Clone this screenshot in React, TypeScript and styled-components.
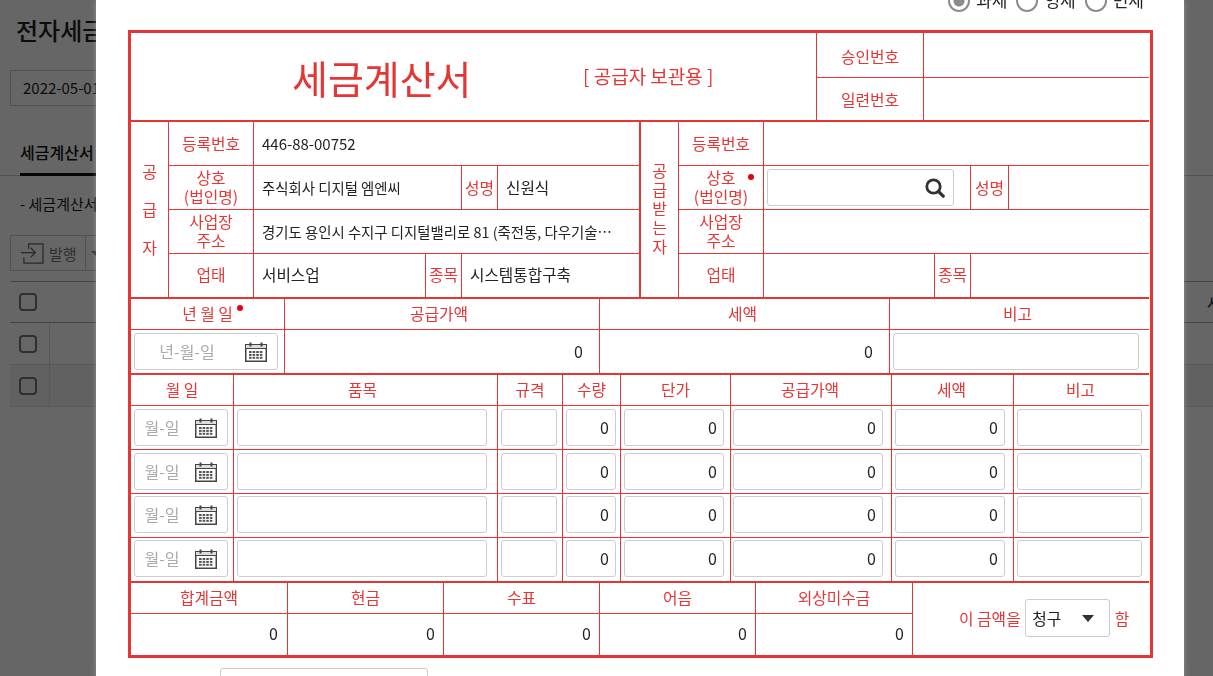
import React from "react";
import styled, { createGlobalStyle } from "styled-components";

const RED = "#e53535";

const GlobalStyle = createGlobalStyle`
  html, body {
    margin: 0;
    height: 100%;
    overflow: hidden;
    background: #fff;
    font-family: "Noto Sans CJK KR", "Noto Sans", sans-serif;
    color: #222;
  }
  * { box-sizing: border-box; }
`;

function CalendarIcon() {
  const dots = [];
  for (let r = 0; r < 3; r++) {
    for (let c = 0; c < 4; c++) {
      dots.push(<rect key={r + "-" + c} x={4 + c * 3.6} y={9 + r * 2.9} width="2.6" height="2" fill="#555" />);
    }
  }
  return (
    <svg width="22" height="20" viewBox="0 0 22 20">
      <rect x="0.75" y="2.75" width="20.5" height="16.5" fill="#fff" stroke="#444" strokeWidth="1.5" />
      <rect x="1" y="3" width="20" height="3.5" fill="#ddd" />
      <line x1="1" y1="6.5" x2="21" y2="6.5" stroke="#444" strokeWidth="1" />
      <rect x="4.5" y="0.5" width="2" height="4" fill="#444" />
      <rect x="15.5" y="0.5" width="2" height="4" fill="#444" />
      {dots}
    </svg>
  );
}

function SearchIcon() {
  return (
    <svg width="20" height="20" viewBox="0 0 20 20">
      <circle cx="8.5" cy="8.5" r="6.7" fill="none" stroke="#333" strokeWidth="2.8" />
      <line x1="13.5" y1="13.5" x2="18.2" y2="18.2" stroke="#333" strokeWidth="3.2" strokeLinecap="round" />
    </svg>
  );
}

function DateField({ text }: { text: string }) {
  return (
    <DateBox>
      <DateInput placeholder={text} readOnly />
      <CalendarIcon />
    </DateBox>
  );
}

const itemCols = "103px 264px 65px 58px 110px 161px 122px 135px";
const itemRows = [0, 1, 2, 3];

export default function App() {
  return (
    <>
      <GlobalStyle />
      <Page>
        <PageTitle>전자세금계산서 발행</PageTitle>
        <DateFilter>2022-05-01</DateFilter>
        <Tabs>
          <Tab>세금계산서 발행</Tab>
        </Tabs>
        <Note>- 세금계산서 발행 내역을 확인합니다.</Note>
        <Actions>
          <IssueButton>
            <svg width="23" height="21" viewBox="0 0 24 22">
              <path d="M8 6V1h15v20H3v-6" fill="none" stroke="#666" strokeWidth="1.3" />
              <path d="M0 10h15M10 5l5 5-5 5" fill="none" stroke="#666" strokeWidth="1.3" />
            </svg>
            발행
          </IssueButton>
          <IssueCaret />
        </Actions>
        <ListRow $head>
          <CheckCell><Check /></CheckCell>
          <HeadText>사업자</HeadText>
        </ListRow>
        <ListRow>
          <CheckCell $line><Check /></CheckCell>
        </ListRow>
        <ListRow $shade>
          <CheckCell $line><Check /></CheckCell>
        </ListRow>
      </Page>

      <Overlay>
        <Modal>
          <TaxTypes>
            <TaxType><Radio $on />과세</TaxType>
            <TaxType><Radio />영세</TaxType>
            <TaxType><Radio />면세</TaxType>
          </TaxTypes>

          <Invoice>
            <HeaderSection>
              <TitleCell>
                <Title>세금계산서</Title>
                <Subtitle>[ 공급자 보관용 ]</Subtitle>
              </TitleCell>
              <NumberCell>승인번호</NumberCell>
              <Cell $end />
              <Cell $bottom>일련번호</Cell>
              <Cell $end $bottom />
            </HeaderSection>

            <PartySection>
              <PartyGrid $divider>
                <SideCell $gap={38}><span>공</span><span>급</span><span>자</span></SideCell>
                <Cell>등록번호</Cell>
                <ValueCell $span={4} $end $digits>446-88-00752</ValueCell>
                <Cell $stack>상호<br />(법인명)</Cell>
                <ValueCell $span={2} $small>주식회사 디지털 엠엔씨</ValueCell>
                <Cell>성명</Cell>
                <ValueCell $end>신원식</ValueCell>
                <Cell $stack>사업장<br />주소</Cell>
                <ValueCell $span={4} $end $small><Clip>경기도 용인시 수지구 디지털밸리로 81 (죽전동, 다우기술빌딩)</Clip></ValueCell>
                <LastCell $bottom>업태</LastCell>
                <ValueCell $bottom>서비스업</ValueCell>
                <LastCell $bottom>종목</LastCell>
                <ValueCell $span={2} $end $bottom>시스템통합구축</ValueCell>
              </PartyGrid>
              <PartyGrid $buyer>
                <SideCell $gap={19}><span>공</span><span>급</span><span>받</span><span>는</span><span>자</span></SideCell>
                <Cell>등록번호</Cell>
                <ValueCell $span={4} $end />
                <Cell $stack>
                  상호<br />(법인명)
                  <NameDot />
                </Cell>
                <InputCell $span={2} $pr={16}>
                  <SearchBox><SearchIcon /></SearchBox>
                </InputCell>
                <Cell>성명</Cell>
                <ValueCell $end />
                <Cell $stack>사업장<br />주소</Cell>
                <ValueCell $span={4} $end />
                <LastCell $bottom>업태</LastCell>
                <ValueCell $bottom />
                <LastCell $bottom>종목</LastCell>
                <ValueCell $span={2} $end $bottom />
              </PartyGrid>
            </PartySection>

            <Section $cols="154px 315px 290px 259px" $rows="31px 43px" $line>
              <ColumnHead>년 월 일<Dot /></ColumnHead>
              <ColumnHead $shift={6}>공급가액</ColumnHead>
              <ColumnHead $shift={4}>세액</ColumnHead>
              <ColumnHead $shift={4} $end>비고</ColumnHead>
              <InputCell $pr={6} $bottom><DateField text="년-월-일" /></InputCell>
              <AmountCell $pr={16} $pb={2} $bottom>0</AmountCell>
              <AmountCell $pr={16} $pb={2} $bottom>0</AmountCell>
              <InputCell $pr={10} $end $bottom><Field /></InputCell>
            </Section>

            <Section $cols={itemCols} $rows="31px 44px 44px 44px 43px" $line>
              <ColumnHead>월 일</ColumnHead>
              <ColumnHead $shift={6}>품목</ColumnHead>
              <ColumnHead>규격</ColumnHead>
              <ColumnHead>수량</ColumnHead>
              <ColumnHead>단가</ColumnHead>
              <ColumnHead $shift={2}>공급가액</ColumnHead>
              <ColumnHead $shift={2}>세액</ColumnHead>
              <ColumnHead $shift={2} $end>비고</ColumnHead>
              {itemRows.map((r) => {
                const last = r === 3;
                const lift = r >= 2;
                return (
                  <React.Fragment key={r}>
                    <InputCell $pr={5} $lift={lift} $bottom={last}><DateField text="월-일" /></InputCell>
                    <InputCell $pr={10} $lift={lift} $bottom={last}><Field /></InputCell>
                    <InputCell $pr={5} $lift={lift} $bottom={last}><Field /></InputCell>
                    <InputCell $pr={4} $lift={lift} $bottom={last}><Field $right value="0" readOnly /></InputCell>
                    <InputCell $pr={6} $lift={lift} $bottom={last}><Field $right value="0" readOnly /></InputCell>
                    <InputCell $pr={8} $left={2} $lift={lift} $bottom={last}><Field $right value="0" readOnly /></InputCell>
                    <InputCell $pr={8} $lift={lift} $bottom={last}><Field $right value="0" readOnly /></InputCell>
                    <InputCell $pr={7} $lift={lift} $end $bottom={last}><Field /></InputCell>
                  </React.Fragment>
                );
              })}
            </Section>

            <Section $cols="157px 156px 156px 156px 157px 236px" $rows="31px 41px">
              <ColumnHead>합계금액</ColumnHead>
              <ColumnHead>현금</ColumnHead>
              <ColumnHead>수표</ColumnHead>
              <ColumnHead>어음</ColumnHead>
              <ColumnHead>외상미수금</ColumnHead>
              <ClaimCell>
                이 금액을
                <ClaimSelect>청구<Caret /></ClaimSelect>
                함
              </ClaimCell>
              <AmountCell $pr={9} $pb={4} $bottom>0</AmountCell>
              <AmountCell $pr={8} $pb={4} $bottom>0</AmountCell>
              <AmountCell $pr={8} $pb={4} $bottom>0</AmountCell>
              <AmountCell $pr={8} $pb={4} $bottom>0</AmountCell>
              <AmountCell $pr={8} $pb={4} $bottom>0</AmountCell>
            </Section>
          </Invoice>

          <BelowRow>
            <BelowInput />
          </BelowRow>
        </Modal>
      </Overlay>
    </>
  );
}

const Page = styled.div`
  height: 676px;
  overflow: hidden;
  background: #fff;
`;

const PageTitle = styled.h1`
  margin: 0;
  padding: 12px 0 0 16px;
  height: 70px;
  font-size: 24px;
  font-weight: 500;
  line-height: 36px;
  white-space: nowrap;
`;

const DateFilter = styled.div`
  margin-left: 10px;
  width: 200px;
  height: 36px;
  padding-left: 12px;
  border: 1px solid #ccc;
  font-size: 15px;
  line-height: 34px;
`;

const Tabs = styled.div`
  height: 70px;
  border-bottom: 1px solid #ccc;
  display: flex;
  align-items: flex-end;
  padding-left: 20px;
`;

const Tab = styled.div`
  height: 42px;
  padding-top: 6px;
  border-bottom: 3px solid #111;
  margin-bottom: -1px;
  font-size: 16px;
  font-weight: 500;
  color: #111;
`;

const Note = styled.div`
  height: 59px;
  padding: 17px 0 0 20px;
  font-size: 15px;
`;

const Actions = styled.div`
  display: flex;
  height: 46px;
  margin-left: 10px;
  align-items: flex-start;
`;

const IssueButton = styled.div`
  display: flex;
  align-items: center;
  gap: 5px;
  height: 36px;
  width: 76px;
  padding-left: 10px;
  border: 1px solid #ccc;
  font-size: 15px;
  color: #777;
`;

const IssueCaret = styled.div`
  width: 30px;
  height: 36px;
  border: 1px solid #ccc;
  border-left: 0;
  position: relative;
  &::after {
    content: "";
    position: absolute;
    top: 15px;
    left: 5px;
    border: 5px solid transparent;
    border-top-color: #777;
  }
`;

const ListRow = styled.div<{ $head?: boolean; $shade?: boolean }>`
  display: flex;
  justify-content: space-between;
  align-items: center;
  margin-left: 10px;
  height: 42px;
  border-top: ${(p) => (p.$head ? "1px solid #aaa" : "0")};
  border-bottom: 1px solid ${(p) => (p.$head ? "#aaa" : "#ddd")};
  background: ${(p) => (p.$shade ? "#f3f3f3" : "transparent")};
`;

const CheckCell = styled.div<{ $line?: boolean }>`
  width: 40px;
  height: 100%;
  display: flex;
  align-items: center;
  padding-left: 9px;
  border-right: ${(p) => (p.$line ? "1px solid #ddd" : "0")};
`;

const Check = styled.span`
  width: 18px;
  height: 18px;
  border: 2px solid #777;
  border-radius: 4px;
  display: block;
`;

const HeadText = styled.span`
  margin-right: -14px;
  font-size: 15px;
  white-space: nowrap;
  width: 20px;
  overflow: hidden;
`;

const Overlay = styled.div`
  position: fixed;
  inset: 0;
  background: rgba(0, 0, 0, 0.6);
  display: flex;
  justify-content: flex-start;
  overflow: hidden;
`;

const Modal = styled.div`
  width: 1088px;
  margin-left: 96px;
  height: 100%;
  background: #fff;
  padding: 0 31px 0 32px;
  overflow: hidden;
  box-shadow: 0 0 5px rgba(255, 255, 255, 0.3);
`;

const TaxTypes = styled.div`
  display: flex;
  justify-content: flex-end;
  gap: 9px;
  height: 42px;
  margin-top: -12px;
  padding: 0 9px 0 0;
`;

const TaxType = styled.label`
  display: flex;
  align-items: flex-start;
  gap: 6px;
  font-size: 17px;
  line-height: 24px;
  color: #222;
`;

const Radio = styled.span<{ $on?: boolean }>`
  display: block;
  width: 22px;
  height: 22px;
  margin-top: 2px;
  border-radius: 50%;
  border: 2px solid #8c8c8c;
  background: ${(p) => (p.$on ? "radial-gradient(circle, #8c8c8c 0 5px, #fff 6px)" : "#fff")};
`;

const Invoice = styled.div`
  width: 1025px;
  height: 628px;
  border: 3px solid ${RED};
  padding-right: 1px;
`;

const Cell = styled.div<{ $end?: boolean; $bottom?: boolean; $stack?: boolean }>`
  position: relative;
  display: ${(p) => (p.$stack ? "block" : "flex")};
  align-items: center;
  justify-content: center;
  text-align: center;
  min-width: 0;
  color: ${RED};
  font-size: 15.8px;
  line-height: 19px;
  padding-top: ${(p) => (p.$stack ? "2px" : "0")};
  border-right: ${(p) => (p.$end ? "0" : `1px solid ${RED}`)};
  border-bottom: ${(p) => (p.$bottom ? "0" : `1px solid ${RED}`)};
`;

const NumberCell = styled(Cell)`
  padding-top: 2px;
`;

const LastCell = styled(Cell)`
  padding-bottom: 2px;
`;

const ColumnHead = styled(Cell)<{ $shift?: number }>`
  padding: 0 ${(p) => p.$shift ?? 0}px 2px 0;
`;

const HeaderSection = styled.div`
  display: grid;
  grid-template-columns: 686px 107px 225px;
  grid-template-rows: 45px 42px;
  border-bottom: 2px solid ${RED};
`;

const TitleCell = styled.div`
  grid-row: span 2;
  display: flex;
  align-items: center;
  padding-left: 161px;
  border-right: 1px solid ${RED};
  color: ${RED};
`;

const Title = styled.div`
  width: 291px;
  font-size: 39px;
  line-height: 50px;
  white-space: nowrap;
`;

const Subtitle = styled.div`
  font-size: 19px;
  padding-bottom: 2px;
  white-space: nowrap;
`;

const PartySection = styled.div`
  display: flex;
  border-bottom: 2px solid ${RED};
`;

const PartyGrid = styled.div<{ $divider?: boolean; $buyer?: boolean }>`
  display: grid;
  width: ${(p) => (p.$divider ? "510px" : "508px")};
  grid-template-columns: ${(p) =>
    p.$buyer ? "38px 85px 171px 36px 38px 140px" : "38px 85px 172px 36px 36px 141px"};
  grid-template-rows: 44px 44px 44px 43px;
  border-right: ${(p) => (p.$divider ? `2px solid ${RED}` : "0")};
`;

const SideCell = styled.div<{ $gap: number }>`
  grid-row: span 4;
  display: flex;
  flex-direction: column;
  align-items: center;
  justify-content: center;
  padding-bottom: 2px;
  color: ${RED};
  font-size: 16px;
  line-height: ${(p) => p.$gap}px;
  border-right: 1px solid ${RED};
`;

const ValueCell = styled.div<{ $span?: number; $end?: boolean; $bottom?: boolean; $small?: boolean; $digits?: boolean }>`
  grid-column: span ${(p) => p.$span ?? 1};
  display: flex;
  align-items: center;
  min-width: 0;
  padding: 0 0 ${(p) => (p.$bottom ? "2px" : "0")} 8px;
  font-size: ${(p) => (p.$small ? "14.4px" : p.$digits ? "15px" : "15.7px")};
  color: #222;
  border-right: ${(p) => (p.$end ? "0" : `1px solid ${RED}`)};
  border-bottom: ${(p) => (p.$bottom ? "0" : `1px solid ${RED}`)};
`;

const Clip = styled.span`
  display: block;
  width: 350px;
  white-space: nowrap;
  overflow: hidden;
  text-overflow: ellipsis;
`;

const InputCell = styled.div<{ $span?: number; $pr: number; $left?: number; $end?: boolean; $bottom?: boolean; $lift?: boolean }>`
  grid-column: span ${(p) => p.$span ?? 1};
  display: flex;
  align-items: center;
  min-width: 0;
  padding: 0 ${(p) => p.$pr}px ${(p) => (p.$lift ? "2px" : "0")} ${(p) => p.$left ?? 3}px;
  border-right: ${(p) => (p.$end ? "0" : `1px solid ${RED}`)};
  border-bottom: ${(p) => (p.$bottom ? "0" : `1px solid ${RED}`)};
`;

const AmountCell = styled.div<{ $pr: number; $pb: number; $bottom?: boolean }>`
  display: flex;
  align-items: center;
  justify-content: flex-end;
  padding: 0 ${(p) => p.$pr}px ${(p) => p.$pb}px 0;
  font-size: 16px;
  color: #222;
  border-right: 1px solid ${RED};
  border-bottom: ${(p) => (p.$bottom ? "0" : `1px solid ${RED}`)};
`;

const Section = styled.div<{ $cols: string; $rows: string; $line?: boolean }>`
  display: grid;
  grid-template-columns: ${(p) => p.$cols};
  grid-template-rows: ${(p) => p.$rows};
  border-bottom: ${(p) => (p.$line ? `2px solid ${RED}` : "0")};
`;

const Dot = styled.span`
  position: absolute;
  top: 6px;
  left: 106px;
  width: 6px;
  height: 6px;
  border-radius: 50%;
  background: #e60012;
`;

const NameDot = styled(Dot)`
  top: 8px;
  left: 69px;
`;

const Field = styled.input<{ $right?: boolean }>`
  width: 100%;
  height: 37px;
  padding: 0 6px 2px;
  border: 1px solid #ccc;
  border-radius: 3px;
  outline: none;
  background: #fff;
  color: #222;
  text-align: ${(p) => (p.$right ? "right" : "left")};
  font-family: inherit;
  font-size: 16px;
`;

const DateBox = styled.label`
  display: flex;
  align-items: center;
  width: 100%;
  height: 37px;
  padding-right: 10px;
  border: 1px solid #ccc;
  border-radius: 3px;
  background: #fff;
`;

const DateInput = styled.input`
  flex: 1;
  min-width: 0;
  height: 100%;
  border: 0;
  outline: none;
  padding: 0 6px 2px 0;
  background: transparent;
  text-align: center;
  font-family: inherit;
  font-size: 16px;
  &::placeholder {
    color: #aaa;
    opacity: 1;
  }
`;

const SearchBox = styled.div`
  display: flex;
  align-items: center;
  justify-content: flex-end;
  width: 100%;
  height: 37px;
  padding-right: 8px;
  border: 1px solid #ccc;
  border-radius: 3px;
`;

const ClaimCell = styled.div`
  grid-column: 6;
  grid-row: 1 / span 2;
  display: flex;
  align-items: center;
  gap: 4.5px;
  padding: 0 0 2px 46px;
  color: ${RED};
  font-size: 15.8px;
  white-space: nowrap;
`;

const ClaimSelect = styled.div`
  display: flex;
  align-items: center;
  justify-content: space-between;
  width: 85px;
  height: 38px;
  padding: 0 15px 0 6px;
  border: 1px solid #ccc;
  border-radius: 3px;
  color: #222;
`;

const Caret = styled.span`
  border: 6px solid transparent;
  border-top: 7px solid #333;
  border-bottom: 0;
`;

const BelowRow = styled.div`
  padding: 10px 0 0 92px;
`;

const BelowInput = styled.div`
  width: 208px;
  height: 37px;
  border: 1px solid #ccc;
  border-radius: 3px;
`;
